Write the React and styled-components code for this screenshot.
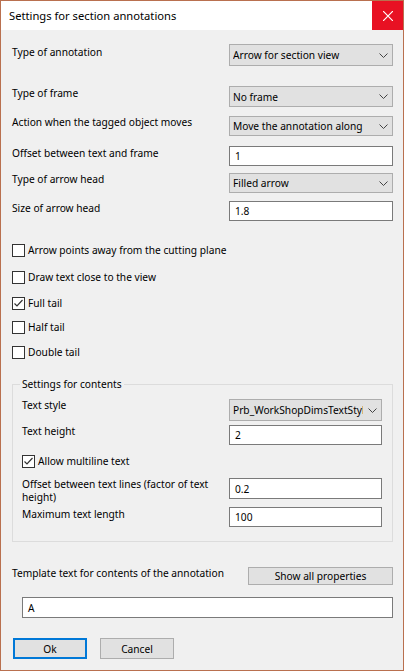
import React from "react";
import styled, { createGlobalStyle } from "styled-components";

const GlobalStyle = createGlobalStyle`
  html, body {
    margin: 0;
    padding: 0;
    background: #ffffff;
  }
  body {
    font-family: "Noto Sans", "Liberation Sans", sans-serif;
    font-size: 10.2px;
    color: #000;
  }
`;

const Window = styled.div`
  width: 404px;
  height: 671px;
  box-sizing: border-box;
  border: 1px solid #b9704f;
  display: flex;
  flex-direction: column;
  background: #f0f0f0;
`;

const TitleBar = styled.div`
  height: 29px;
  background: #fff;
  display: flex;
  align-items: center;
`;

const Title = styled.div`
  flex: 1;
  padding-left: 8px;
  line-height: 16px;
  font-size: 11.2px;
`;

const CloseButton = styled.div`
  width: 31px;
  height: 29px;
  background: #e81123;
  display: flex;
  align-items: center;
  justify-content: center;
`;

const Body = styled.div`
  flex: 1;
  padding: 0 10px 0 11px;
  display: flex;
  flex-direction: column;
`;

const Row = styled.div`
  display: flex;
  align-items: flex-start;
  margin-top: ${(p) => p.$mt}px;
`;

const Label = styled.div`
  flex: 1;
  line-height: ${(p) => p.$lh || 16}px;
  padding-right: 6px;
  white-space: ${(p) => (p.$wrap ? "normal" : "nowrap")};
`;

const Field = styled.div`
  width: ${(p) => p.$w}px;
  height: ${(p) => p.$h}px;
  margin-top: ${(p) => p.$off || 0}px;
  box-sizing: border-box;
  display: flex;
  align-items: center;
  white-space: nowrap;
  overflow: hidden;
`;

const Combo = styled(Field)`
  border: 1px solid #adadad;
  background: #e1e1e1;
  padding-left: 3px;
`;

const ComboText = styled.span`
  flex: 1;
  overflow: hidden;
`;

const Chevron = styled.span`
  width: 18px;
  flex: none;
  display: flex;
  justify-content: center;
`;

const TextBox = styled(Field)`
  border: 1px solid #7a7a7a;
  background: #fff;
  padding-left: 5px;
  margin-left: ${(p) => p.$ml || 0}px;
`;

const CheckRow = styled.div`
  display: flex;
  align-items: center;
  height: 16px;
  margin-top: ${(p) => p.$mt}px;
`;

const Box = styled.span`
  width: 13px;
  height: 13px;
  box-sizing: border-box;
  border: 1px solid #333;
  background: #fff;
  margin-right: 3px;
  display: flex;
  align-items: center;
  justify-content: center;
`;

const Group = styled.fieldset`
  margin: 16px 0 0 0;
  padding: 0 10px 14px 9px;
  border: 1px solid #dcdcdc;
  min-width: 0;
`;

const Legend = styled.legend`
  padding: 0 2px;
  margin-left: -2px;
  line-height: 16px;
`;

const Button = styled.div`
  width: ${(p) => p.$w}px;
  height: ${(p) => p.$h}px;
  margin-top: ${(p) => p.$off || 0}px;
  box-sizing: border-box;
  border: ${(p) => (p.$default ? "2px solid #0078d7" : "1px solid #adadad")};
  background: #e1e1e1;
  display: flex;
  align-items: center;
  justify-content: center;
`;

const ButtonBar = styled.div`
  display: flex;
  gap: 13px;
  margin: 20px 0 0 1px;
`;

const ChevronIcon = () => (
  <svg width="9" height="5" viewBox="0 0 9 5">
    <path d="M0.5 0.5 L4.5 4.5 L8.5 0.5" fill="none" stroke="#444" strokeWidth="1" />
  </svg>
);

const Select = ({ value, w, h, off }) => (
  <Combo $w={w} $h={h} $off={off}>
    <ComboText>{value}</ComboText>
    <Chevron>
      <ChevronIcon />
    </Chevron>
  </Combo>
);

const Check = ({ label, checked, mt }) => (
  <CheckRow $mt={mt}>
    <Box>
      {checked && (
        <svg width="11" height="11" viewBox="0 0 11 11">
          <path d="M1.5 5.5 L4 8 L9.5 2" fill="none" stroke="#333" strokeWidth="1.2" />
        </svg>
      )}
    </Box>
    {label}
  </CheckRow>
);

export default function App() {
  return (
    <>
      <GlobalStyle />
      <Window>
        <TitleBar>
          <Title>Settings for section annotations</Title>
          <CloseButton>
            <svg width="10" height="10" viewBox="0 0 10 10">
              <path d="M0 0 L10 10 M10 0 L0 10" stroke="#fff" strokeWidth="1.2" />
            </svg>
          </CloseButton>
        </TitleBar>
        <Body>
          <Row $mt={14}>
            <Label>Type of annotation</Label>
            <Select value="Arrow for section view" w={164} h={22} />
          </Row>
          <Row $mt={19}>
            <Label>Type of frame</Label>
            <Select value="No frame" w={164} h={21} off={1} />
          </Row>
          <Row $mt={7}>
            <Label>Action when the tagged object moves</Label>
            <Select value="Move the annotation along" w={164} h={20} off={2} />
          </Row>
          <Row $mt={9}>
            <Label>Offset between text and frame</Label>
            <TextBox $w={164} $h={20} $off={1}>1</TextBox>
          </Row>
          <Row $mt={5}>
            <Label>Type of arrow head</Label>
            <Select value="Filled arrow" w={164} h={20} off={2} />
          </Row>
          <Row $mt={7}>
            <Label>Size of arrow head</Label>
            <TextBox $w={164} $h={20} $off={1}>1.8</TextBox>
          </Row>

          <Check mt={21} label="Arrow points away from the cutting plane" />
          <Check mt={11} label="Draw text close to the view" />
          <Check mt={10} label="Full tail" checked />
          <Check mt={8} label="Half tail" />
          <Check mt={9} label="Double tail" />

          <Group>
            <Legend>Settings for contents</Legend>
            <Row $mt={5}>
              <Label>Text style</Label>
              <Select value="Prb_WorkShopDimsTextStyle" w={153} h={22} off={2} />
            </Row>
            <Row $mt={2}>
              <Label>Text height</Label>
              <TextBox $w={153} $h={20} $off={2}>2</TextBox>
            </Row>
            <Check mt={8} label="Allow multiline text" checked />
            <Row $mt={9}>
              <Label $lh={13} $wrap>Offset between text lines (factor of text height)</Label>
              <TextBox $w={153} $h={21}>0.2</TextBox>
            </Row>
            <Row $mt={2}>
              <Label>Maximum text length</Label>
              <TextBox $w={153} $h={20} $off={1}>100</TextBox>
            </Row>
          </Group>

          <Row $mt={23}>
            <Label>Template text for contents of the annotation</Label>
            <Button $w={145} $h={18} $off={2}>Show all properties</Button>
          </Row>
          <Row $mt={12}>
            <TextBox $w={371} $h={21} $ml={10}>A</TextBox>
          </Row>

          <ButtonBar>
            <Button $w={74} $h={21} $default>Ok</Button>
            <Button $w={74} $h={21}>Cancel</Button>
          </ButtonBar>
        </Body>
      </Window>
    </>
  );
}
